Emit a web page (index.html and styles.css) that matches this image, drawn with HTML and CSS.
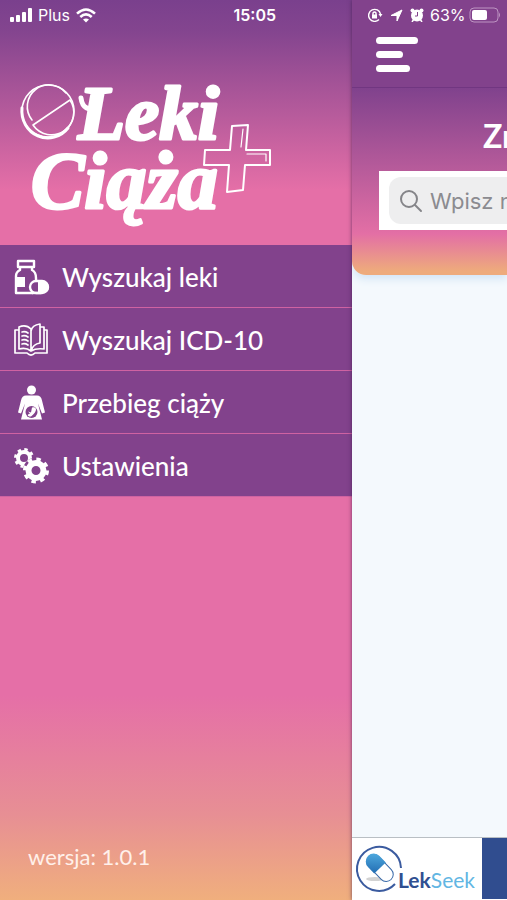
FILE: index.html
```html
<!DOCTYPE html>
<html lang="pl">
<head>
<meta charset="utf-8">
<meta name="viewport" content="width=device-width, initial-scale=1">
<title>Leki Ciąża+</title>
<link rel="stylesheet" href="styles.css">
</head>
<body>
<div class="app">
  <aside class="drawer">
    <div class="status">
      <svg class="signal" width="23" height="14" viewBox="0 0 23 14" fill="#fff" aria-hidden="true">
        <rect x="0" y="9" width="4" height="5" rx="1"/><rect x="6" y="7" width="4" height="7" rx="1"/><rect x="12" y="4" width="4" height="10" rx="1"/><rect x="18" y="0" width="4" height="14" rx="1"/>
      </svg>
      <span class="carrier">Plus</span>
      <svg width="20" height="15" viewBox="0 0 20 15" fill="none" stroke="#fff" stroke-width="2.6" aria-hidden="true">
        <path d="M1 5.6Q10-2.6 19 5.6M4.3 9Q10 3.8 15.7 9"/><path d="M7 11.6q3-2.4 6 0l-3 3z" fill="#fff" stroke="none"/>
      </svg>
      <span class="clock">15:05</span>
    </div>
    <svg class="logo" width="256" height="150" viewBox="20 70 256 150" role="img" aria-label="Leki Ciąża+">
      <g fill="none" stroke="#fff" stroke-linejoin="round" stroke-linecap="round">
        <circle cx="48" cy="111" r="26" stroke-width="1.5"/>
        <path d="M22 108a26 27 0 0 0 46 20" stroke-width="3"/>
        <path d="M32 120a21 21 0 0 1 34-27M33 125a21 21 0 0 0 37-25z" stroke-width="1.6"/>
        <path d="M232 126l16-1-2 25h24v15h-25l-2 25-16 2 2-27h-25l1-15h25z" stroke-width="2"/>
        <path d="M243 129l-2 18M247 154h19v7" stroke-width="1.2"/>
        <path d="M81 98q2 15 17 9" stroke-width="5"/>
      </g>
      <g class="logo-text">
        <text class="logo-top" x="78" y="139">Leki</text>
        <text x="31" y="208">Ciąża</text>
      </g>
    </svg>
    <nav class="menu">
      <a href="#leki">
        <svg width="36" height="36" viewBox="0 0 36 36" fill="none" stroke="#fff" stroke-width="2.4" stroke-linejoin="round" aria-hidden="true">
          <path d="M4 2h16v6H4zM6 8v3q-4 2-4 6v17h17M18 8v3q4 2 4 8v2"/>
          <path d="M2 18h9v10H2z" fill="#fff" stroke="none"/>
          <path d="M18 34h9"/>
          <rect x="16" y="22" width="18" height="12" rx="6"/>
          <path d="M24 22h5a6 6 0 0 1 0 12h-5z" fill="#fff" stroke="none"/>
        </svg>
        <span>Wyszukaj leki</span>
      </a>
      <a href="#icd">
        <svg width="36" height="36" viewBox="0 0 36 36" fill="none" stroke="#fff" stroke-width="1.700" stroke-linejoin="round" stroke-linecap="round" aria-hidden="true">
          <path d="M5 5q7-3 12 2v22q-5-4-12-2zM17 9q1-6 9-7v19q-7 1-9 8M26 5h4v22q-8-1-13 2M5 8H1v23h12q4 4 8 0h12V8h-3"/>
          <path d="M8 10q3-1 6 1M8 14q3-1 6 1M8 18q3-1 6 1M8 22q3-1 6 1"/>
        </svg>
        <span>Wyszukaj ICD-10</span>
      </a>
      <a href="#ciaza">
        <svg width="36" height="36" viewBox="0 0 36 36" fill="#fff" aria-hidden="true">
          <circle cx="17.500" cy="5" r="4.500"/>
          <path d="M12 10.500h11q4 0 5 5l3 12-3 1-4-10 4 16H7l4-16-4 10-3-1 3-12q1-5 5-5z"/>
          <circle cx="17.500" cy="27" r="6" fill="#82428c"/>
          <path d="M18 22.500q4-1 4 2t-5 7q-4 0-3-2l2-1-2-2 3 1z"/>
        </svg>
        <span>Przebieg ciąży</span>
      </a>
      <a href="#ustawienia">
        <svg width="36" height="36" viewBox="0 0 36 36" fill="none" stroke="#fff" aria-hidden="true">
          <circle cx="10" cy="10" r="6" stroke-width="4"/>
          <circle cx="10" cy="10" r="8.500" stroke-width="3" stroke-dasharray="3.340 3.340"/>
          <circle cx="22" cy="22.500" r="13" fill="#82428c" stroke="none"/>
          <circle cx="22" cy="22.500" r="7.500" stroke-width="6"/>
          <circle cx="22" cy="22.500" r="11" stroke-width="4" stroke-dasharray="4.320 4.320"/>
        </svg>
        <span>Ustawienia</span>
      </a>
    </nav>
    <p class="version">wersja: 1.0.1</p>
  </aside>

  <main class="page">
    <header class="topbar">
      <div class="status status-right">
        <svg width="15" height="14" viewBox="0 0 15 14" fill="none" stroke="#fff" stroke-width="1.400" aria-hidden="true">
          <path d="M12.500 6A6 6 0 1 0 11 11.500"/><path d="M10.500 6h4l-2 3z" fill="#fff" stroke="none"/><path d="M4 6.500h5v4H4z" fill="#fff" stroke="none"/><path d="M5 7V5q1.500-2 3 0v2"/>
        </svg>
        <svg width="13" height="13" viewBox="0 0 13 13" fill="#fff" stroke="#fff" stroke-linejoin="round" aria-hidden="true"><path d="M12 1L7 12V6.500H1z"/></svg>
        <svg width="14" height="14" viewBox="0 0 14 14" fill="#fff" aria-hidden="true"><circle cx="7" cy="7.500" r="6"/><circle cx="2.500" cy="2.500" r="2"/><circle cx="11.500" cy="2.500" r="2"/><path d="M2 14l2-3M12 14l-2-3" stroke="#fff" stroke-width="1.500"/><path d="M7.500 4v4H5" fill="none" stroke="#82428c"/></svg>
        <span class="charge">63%</span>
        <svg class="battery" width="31" height="16" viewBox="0 0 31 16" aria-hidden="true"><rect x="1" y="1" width="28" height="14" rx="4" fill="none" stroke="#bd94c2"/><rect x="3" y="3" width="15" height="10" rx="2" fill="#fff"/><path d="M30 5.500q2 2.500 0 5z" fill="#bd94c2"/></svg>
      </div>
      <button class="burger" type="button" aria-label="Menu"><i></i><i></i><i></i></button>
    </header>
    <section class="hero">
      <h1>Znajdź</h1>
      <div class="search">
        <label class="field">
          <svg width="24" height="24" viewBox="0 0 24 24" fill="none" stroke="#858589" stroke-width="2" stroke-linecap="round" aria-hidden="true"><circle cx="10" cy="10" r="8"/><path d="M16 16l6 6"/></svg>
          <input type="text" placeholder="Wpisz nazwę" aria-label="Wpisz nazwę">
        </label>
      </div>
    </section>
    <footer class="banner">
      <svg width="129" height="60" viewBox="0 0 129 60" role="img" aria-label="LekSeek">
        <defs><linearGradient id="cap" x1="0" y1="0" x2="1" y2="1"><stop offset="0" stop-color="#55b2e4"/><stop offset="1" stop-color="#226db3"/></linearGradient></defs>
        <ellipse cx="23" cy="41" rx="9" ry="2" fill="#d3d3d3"/>
        <path d="M49 30A22 22 0 1 0 43 46" fill="none" stroke="#3b5b9f" stroke-width="2"/>
        <g transform="rotate(46 28 30)">
          <rect x="12" y="23" width="32" height="14" rx="7" fill="#fff" stroke="#3768a8"/>
          <path d="M28 22h-9a8 8 0 0 0 0 16h9z" fill="url(#cap)"/>
        </g>
        <text class="brand" x="46" y="50"><tspan class="lek">Lek</tspan><tspan class="seek">Seek</tspan></text>
      </svg>
      <div class="ad"></div>
    </footer>
  </main>
</div>
</body>
</html>
```
FILE: styles.css
```css
* { box-sizing: border-box; }
body {
  margin: 0;
  font-family: Lato, "Open Sans", sans-serif;
  color: #fff;
}
.app {
  display: flex;
  min-height: 100vh;
  overflow: hidden;
}
.drawer {
  flex: 1;
  display: flex;
  flex-direction: column;
  background: linear-gradient(#7a408d 0, #84458f 32px, #e56fa7 190px, #e56fa7 calc(100% - 205px), #e78f94 calc(100% - 85px), #f0af7d 100%);
}
.status {
  display: flex;
  align-items: center;
  height: 30px;
  padding-left: 10px;
  font: 16px Inter, sans-serif;
}
.carrier { margin: 0 6px 0 5px; }
.clock {
  margin-left: auto;
  padding-right: 76px;
  font-weight: 600;
}
.logo {
  margin: 40px 0 25px 20px;
  overflow: visible;
}
.logo-text {
  font: italic bold 80px "Liberation Serif", serif;
  fill: #fff;
  stroke: #fff;
  stroke-width: 3px;
  stroke-linejoin: round;
}
.logo-top { font-size: 77px; }
.menu {
  display: grid;
  gap: 1px;
  padding-bottom: 1px;
  background: #cf62a2;
}
.menu a {
  display: flex;
  align-items: center;
  gap: 12px;
  height: 62px;
  padding: 2px 14px 0;
  background: #82428c;
  color: #fff;
  font-size: 26px;
  line-height: 36px;
  font-weight: 500;
  text-decoration: none;
}
.version {
  margin: auto 0 27px 28px;
  font-size: 22px;
  line-height: 32px;
  color: #fff0ea;
}
.page {
  flex: 0 0 155px;
  min-width: 0;
  display: flex;
  flex-direction: column;
  overflow: hidden;
  background: #f4f9fd;
  box-shadow: 0 0 4px #3c1c48b0;
}
.topbar {
  position: relative;
  z-index: 1;
  height: 88px;
  background: #82428c;
  border-bottom: 1px solid #713681;
}
.status-right {
  gap: 7px;
  padding-left: 16px;
}
.charge { margin-left: -1px; }
.battery { margin-left: -4px; }
.burger {
  display: grid;
  justify-items: start;
  gap: 7px;
  margin: 7px 0 0 24px;
  padding: 0;
  border: 0;
  background: none;
}
.burger i {
  width: 42px;
  height: 7px;
  border-radius: 4px;
  background: #fff;
}
.burger i:nth-child(2) { width: 27px; }
.burger i:nth-child(3) { width: 34px; }
.hero {
  height: 187px;
  padding-top: 28px;
  border-bottom-left-radius: 14px;
  background: linear-gradient(#80428d, #e36fa5 78%, #eeab7c 98%);
  box-shadow: 0 4px 8px #d3e5f5;
}
h1 {
  margin: 0 0 15px 131px;
  font-size: 32px;
  line-height: 40px;
  font-weight: 700;
  white-space: nowrap;
}
.search {
  margin-left: 27px;
  padding: 6px 0 6px 10px;
  background: #fff;
}
.field {
  display: flex;
  align-items: center;
  gap: 7px;
  height: 47px;
  padding-left: 10px;
  border-radius: 12px 0 0 12px;
  background: #eeeeef;
}
.field svg { flex: none; }
.field input {
  flex: 1;
  min-width: 0;
  padding: 0;
  border: 0;
  outline: 0;
  background: none;
  font: 22px Inter, sans-serif;
  color: #333;
}
.field input::placeholder { color: #8b8b90; opacity: 1; }
.banner {
  display: flex;
  height: 63px;
  margin-top: auto;
  padding-bottom: 1px;
  border-top: 1px solid #b9bfc4;
  background: #fff;
}
.banner svg { flex: none; }
.ad {
  flex: 1;
  margin-left: 1px;
  background: #304d8f;
}
.brand { font: 21px Lato, sans-serif; }
.lek { fill: #304f91; font-weight: 700; }
.seek { fill: #62b6e3; }
```
